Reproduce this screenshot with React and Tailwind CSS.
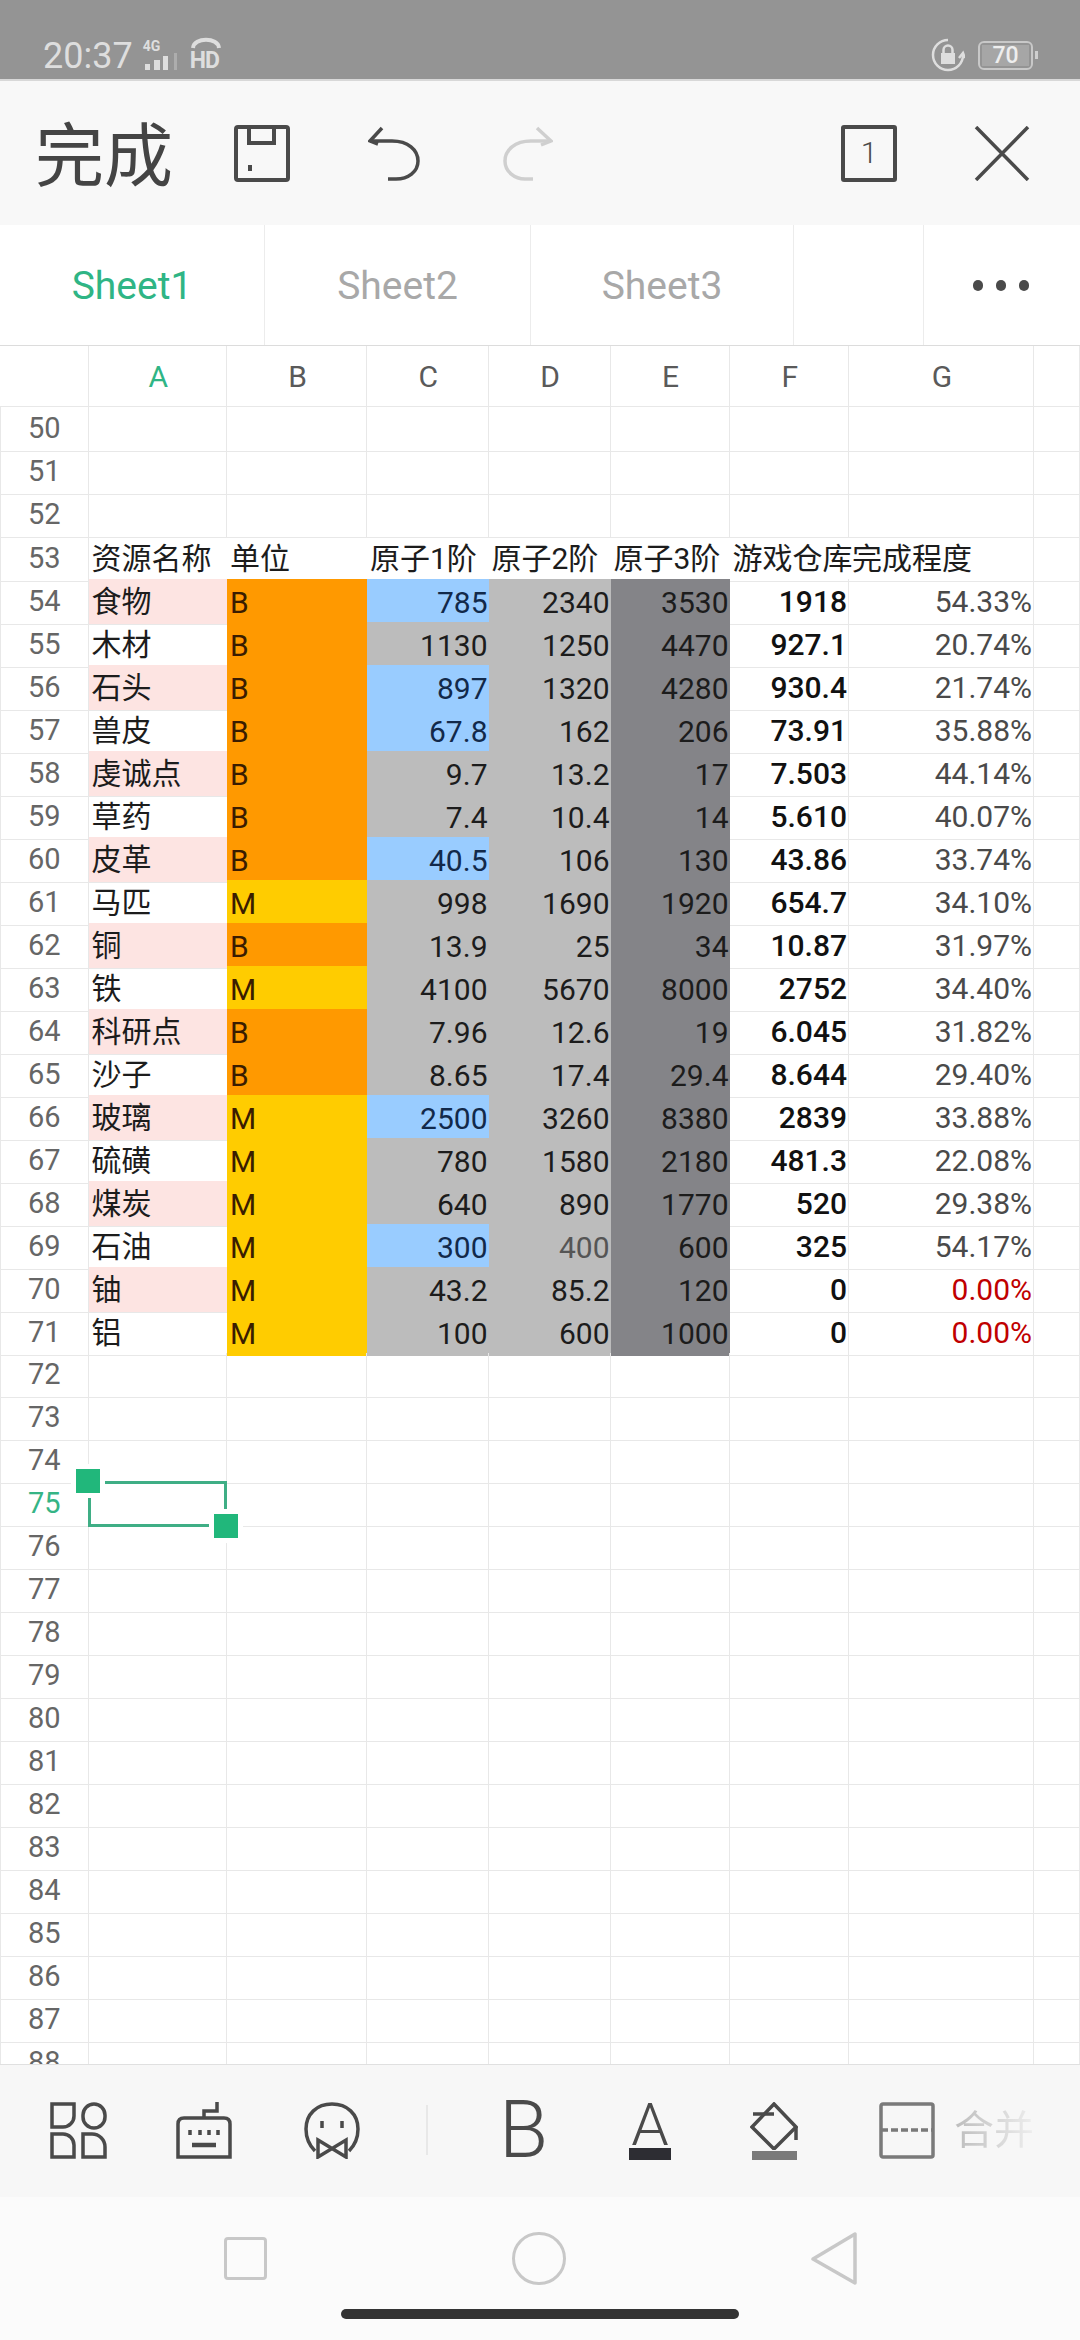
import React from 'react'

const COLS = 'grid-cols-[88.5px_138.5px_140px_121.5px_122px_119px_119.5px_185px_46px]'

// name, unit, c1, c2, c3, stock, pct, c1 is blue
const DATA = [
  [54, '食物', 'B', '785', '2340', '3530', '1918', '54.33%', true],
  [55, '木材', 'B', '1130', '1250', '4470', '927.1', '20.74%'],
  [56, '石头', 'B', '897', '1320', '4280', '930.4', '21.74%', true],
  [57, '兽皮', 'B', '67.8', '162', '206', '73.91', '35.88%', true],
  [58, '虔诚点', 'B', '9.7', '13.2', '17', '7.503', '44.14%'],
  [59, '草药', 'B', '7.4', '10.4', '14', '5.610', '40.07%'],
  [60, '皮革', 'B', '40.5', '106', '130', '43.86', '33.74%', true],
  [61, '马匹', 'M', '998', '1690', '1920', '654.7', '34.10%'],
  [62, '铜', 'B', '13.9', '25', '34', '10.87', '31.97%'],
  [63, '铁', 'M', '4100', '5670', '8000', '2752', '34.40%'],
  [64, '科研点', 'B', '7.96', '12.6', '19', '6.045', '31.82%'],
  [65, '沙子', 'B', '8.65', '17.4', '29.4', '8.644', '29.40%'],
  [66, '玻璃', 'M', '2500', '3260', '8380', '2839', '33.88%', true],
  [67, '硫磺', 'M', '780', '1580', '2180', '481.3', '22.08%'],
  [68, '煤炭', 'M', '640', '890', '1770', '520', '29.38%'],
  [69, '石油', 'M', '300', '400', '600', '325', '54.17%', true],
  [70, '铀', 'M', '43.2', '85.2', '120', '0', '0.00%'],
  [71, '铝', 'M', '100', '600', '1000', '0', '0.00%'],
]
const BY_ROW = Object.fromEntries(DATA.map(d => [d[0], d]))
const HEADERS = ['资源名称', '单位', '原子1阶', '原子2阶', '原子3阶', '游戏仓库', '完成程度']
const ROW_NUMBERS = Array.from({ length: 38 }, (_, i) => i + 50)

const LINE = 'border-r border-b border-[#e8e8e8]'
const NUM = 'flex items-center justify-end pr-[1px] whitespace-nowrap text-[30px]'

function RowLabel({ n }) {
  return (
    <div className={`flex items-center justify-center text-[29px] border-l ${LINE} ${n === 75 ? 'text-[#35b485]' : 'text-[#666666]'}`}>
      {n}
    </div>
  )
}

function EmptyRow({ n }) {
  return (
    <div className={`grid h-[43px] ${COLS}`}>
      <RowLabel n={n} />
      <div className={`relative ${LINE}`}>
        {n === 75 && (
          <div className="absolute -inset-px z-10 border-[3px] border-[#3fae85]">
            <div className="absolute -left-[15px] -top-[15px] w-[24px] h-[24px] bg-[#21b77b] ring-[5px] ring-white" />
            <div className="absolute -right-[14px] -bottom-[14px] w-[24px] h-[24px] bg-[#21b77b] ring-[5px] ring-white" />
          </div>
        )}
      </div>
      {[0, 1, 2, 3, 4, 5, 6].map(i => <div key={i} className={LINE} />)}
    </div>
  )
}

function HeaderRow() {
  return (
    <div className={`grid h-[43px] ${COLS}`}>
      <RowLabel n={53} />
      {HEADERS.map((h, i) => (
        <div key={h} className={`flex items-center pl-[3px] whitespace-nowrap text-[30px] text-[#1c1c1c] border-b border-[#e8e8e8] ${i === 6 ? 'border-r' : ''}`}>
          {h}
        </div>
      ))}
      <div className={LINE} />
    </div>
  )
}

function DataRow({ row }) {
  const [n, name, unit, c1, c2, c3, stock, pct, blue] = row
  const pink = n % 2 === 0
  const unitBg = unit === 'M' ? 'bg-[#ffcc00]' : 'bg-[#ff9900]'
  return (
    <div className={`grid h-[43px] ${COLS}`}>
      <RowLabel n={n} />
      <div className={`flex items-center pl-[3px] text-[30px] text-[#1c1c1c] border-b border-[#e8e8e8] ${pink ? 'bg-[#fde4e2]' : ''}`}>{name}</div>
      <div className={`flex items-center pl-[3px] text-[30px] text-[#3a1c00] ${unitBg}`}>{unit}</div>
      <div className={`${NUM} ${blue ? 'bg-[#99ccff] text-[#12294a]' : 'bg-[#bcbcbc] text-[#1c1c1c]'}`}>{c1}</div>
      <div className={`${NUM} bg-[#bcbcbc] ${n === 69 ? 'text-[#555555]' : 'text-[#1c1c1c]'}`}>{c2}</div>
      <div className={`${NUM} bg-[#848488] text-[#1c1c1c]`}>{c3}</div>
      <div className={`${NUM} font-medium text-[#111111] ${LINE}`}>{stock}</div>
      <div className={`${NUM} ${LINE} ${pct === '0.00%' ? 'text-[#c00000]' : 'text-[#4a4a4a]'}`}>{pct}</div>
      <div className={LINE} />
    </div>
  )
}

function StatusBar() {
  return (
    <div className="h-[81px] shrink-0 flex items-end justify-between pl-[43px] pr-[42px] pb-[7px] bg-[#949494] border-b-2 border-[#d8d8d8] text-[#dedede]">
      <div className="flex items-end">
        <span className="text-[36px] leading-[32px]">20:37</span>
        <div className="relative ml-[10px] w-[38px] h-[32px]">
          <span className="absolute left-0 -top-[1px] text-[14px] font-bold leading-none">4G</span>
          <svg width="38" height="17" viewBox="0 0 38 17" className="absolute left-0 bottom-[2px]" fill="currentColor">
            <rect x="2" y="11" width="5" height="6" />
            <rect x="11" y="7" width="6" height="10" />
            <rect x="20" y="3" width="5" height="14" />
            <rect x="31" y="0" width="3" height="17" opacity=".35" />
          </svg>
        </div>
        <div className="relative ml-[9px] w-[32px] h-[32px]">
          <svg width="32" height="13" viewBox="0 0 32 13" className="absolute left-0 -top-[3px]" fill="none" stroke="currentColor" strokeWidth="4">
            <path d="M3 11 C4 0 28 0 29 11" />
          </svg>
          <span className="absolute left-0 bottom-[1px] text-[23px] font-bold leading-[20px] tracking-[-1px]">HD</span>
        </div>
      </div>
      <div className="flex items-center gap-[13px]">
        <svg width="34" height="34" viewBox="0 0 34 34" fill="none" stroke="currentColor" strokeWidth="2.500">
          <path d="M17 2 A15 15 0 1 0 32 17" />
          <path d="M28 20 L32 15 L34 20" />
          <rect x="10" y="15" width="14" height="11" fill="currentColor" stroke="none" />
          <path d="M12.500 15 V12 A4.500 4.500 0 0 1 21.500 12 V15" />
        </svg>
        <div className="flex items-center gap-[2px]">
          <div className="w-[55px] h-[29px] rounded-[6px] border-2 border-[#c8c8c8] flex items-center justify-center p-[2px]">
            <span className="w-full h-full bg-[#a6a6a6] flex items-center justify-center text-[23px] font-medium leading-none text-[#eeeeee]">70</span>
          </div>
          <div className="w-[3px] h-[8px] bg-[#cfcfcf]" />
        </div>
      </div>
    </div>
  )
}

function TopBar() {
  return (
    <div className="h-[144px] shrink-0 flex items-center bg-[#f8f8f8] pl-[35px] pr-[50px] text-[#4a4a4a]">
      <span className="pt-[8px] text-[69px] leading-none text-[#444444] w-[139px] whitespace-nowrap">完成</span>
      <svg className="ml-[60px]" width="56" height="57" viewBox="0 0 56 57" fill="none" stroke="currentColor" strokeWidth="4">
        <rect x="2" y="2" width="52" height="53" rx="2" />
        <path d="M15 2 V18 H40 V2" />
        <path d="M16 40 V46" />
      </svg>
      <svg className="ml-[78px]" width="52" height="55" viewBox="0 0 52 55" fill="none" stroke="currentColor" strokeWidth="3.500">
        <path d="M14 2 L2 15 L10 18" />
        <path d="M2 15 H24 C40 15 50 24 50 35 C50 46 40 53 28 53 H20" />
      </svg>
      <svg className="ml-[83px]" width="50" height="55" viewBox="0 0 50 55" fill="none" stroke="#cfcfcf" strokeWidth="3.500">
        <path d="M34 2 L48 15 L38 19" />
        <path d="M48 15 H28 C12 15 2 24 2 35 C2 46 12 53 22 53 H30" />
      </svg>
      <div className="ml-auto w-[56px] h-[57px] rounded-[3px] border-[4px] border-[#4a4a4a] flex items-center justify-center text-[30px] font-light leading-none">1</div>
      <svg className="ml-[77px]" width="56" height="55" viewBox="0 0 56 55" fill="none" stroke="currentColor" strokeWidth="3.500">
        <path d="M2 1 L54 54 M54 1 L2 54" />
      </svg>
    </div>
  )
}

function Tabs() {
  return (
    <div className="h-[120px] shrink-0 grid grid-cols-[265px_266px_263px_130px_156px] text-[39px] bg-white">
      <div className="flex items-center justify-center pt-[2px] border-r border-[#ececec] text-[#2fb585]">Sheet1</div>
      <div className="flex items-center justify-center pt-[2px] border-r border-[#ececec] text-[#a8a8a8]">Sheet2</div>
      <div className="flex items-center justify-center pt-[2px] border-r border-[#ececec] text-[#a8a8a8]">Sheet3</div>
      <div className="border-r border-[#ececec]" />
      <div className="flex items-center justify-center gap-[13px] pr-[2px]">
        <span className="w-[10px] h-[11px] rounded-full bg-[#4a4a4a]" />
        <span className="w-[10px] h-[11px] rounded-full bg-[#4a4a4a]" />
        <span className="w-[10px] h-[11px] rounded-full bg-[#4a4a4a]" />
      </div>
    </div>
  )
}

function ColumnHeader() {
  return (
    <div className={`h-[62px] shrink-0 grid ${COLS} border-t border-[#dcdcdc] text-[30px] text-[#5a5a5a]`}>
      {['', 'A', 'B', 'C', 'D', 'E', 'F', 'G', ''].map((c, i) => (
        <div key={i} className={`flex items-center justify-center pl-[2px] ${LINE} ${c === 'A' ? 'text-[#2fb585]' : ''}`}>{c}</div>
      ))}
    </div>
  )
}

function BottomBar() {
  return (
    <div className="h-[132px] shrink-0 flex items-start pt-[37px] pl-[50px] bg-[#f7f7f7] text-[#4a4a4a] overflow-hidden">
      <svg width="57" height="57" viewBox="0 0 57 57" fill="none" stroke="currentColor" strokeWidth="3.500">
        <path d="M2 2 H24 V14 A11 11 0 0 1 13 25 H2 Z" />
        <rect x="33" y="2" width="22" height="24" rx="11" />
        <path d="M2 32 H13 A11 11 0 0 1 24 43 V55 H2 Z" />
        <path d="M33 32 H42 A13 13 0 0 1 55 45 V55 H33 Z" />
      </svg>
      <svg className="ml-[69px]" width="56" height="57" viewBox="0 0 56 57" fill="none" stroke="currentColor" strokeWidth="3.500">
        <path d="M28 16 V9 H41 V0" />
        <path d="M2 55 V22 Q2 16 8 16 H48 Q54 16 54 22 V55 Z" />
        <path d="M14 28 V33 M24 28 V33 M33 28 V33 M42 28 V33" />
        <path d="M16 43 H40" strokeWidth="4.500" />
      </svg>
      <svg className="ml-[72px]" width="56" height="57" viewBox="0 0 56 57" fill="none" stroke="currentColor" strokeWidth="3.500">
        <path d="M11 49 C4 42 2 35 2 27 C2 12 13 2 28 2 C43 2 54 12 54 27 C54 35 52 42 45 49" />
        <path d="M18 19 V26 M38 19 V26" />
        <path d="M14 38 L42 55 V38 L14 55 Z" />
      </svg>
      <div className="ml-[66px] mt-[3px] w-[2px] h-[50px] bg-[#e8e8e8]" />
      <span className="ml-[71px] w-[48px] text-[80px] leading-[57px] font-light">B</span>
      <div className="ml-[81px] w-[44px] flex flex-col items-center">
        <span className="text-[60px] leading-[46px] h-[46px] font-light">A</span>
        <div className="w-[42px] h-[12px] bg-[#2d2d33]" />
      </div>
      <div className="ml-[78px] w-[48px] flex flex-col items-center">
        <svg width="48" height="48" viewBox="0 0 48 48" fill="none" stroke="currentColor" strokeWidth="3.500">
          <path d="M24 2 L46 25 L24 47 L2 25 Z" />
          <path d="M3 12 H24 M46 25 V38" />
        </svg>
        <div className="mt-[1px] w-[45px] h-[9px] bg-[#7a7a7a]" />
      </div>
      <svg className="ml-[81px]" width="56" height="57" viewBox="0 0 56 57" fill="none" stroke="#7a7a7a" strokeWidth="3.500">
        <rect x="2" y="2" width="52" height="53" rx="2" />
        <path d="M2 28 H54" strokeDasharray="7 3" />
      </svg>
      <span className="ml-[19px] mt-[5px] w-[80px] shrink-0 whitespace-nowrap text-[40px] leading-[48px] bg-gradient-to-r from-[#bdbdbd] to-[#eeeeee] bg-clip-text text-transparent">合并</span>
    </div>
  )
}

function NavBar() {
  return (
    <div className="flex-1 flex flex-col items-center bg-[#fbfbfb]">
      <div className="flex items-center h-[112px] pt-[10px]">
        <div className="w-[43px] h-[43px] rounded-[4px] border-[3px] border-[#c8c8c8]" />
        <div className="ml-[245px] w-[54px] h-[53px] rounded-full border-[3px] border-[#c8c8c8]" />
        <svg className="ml-[245px]" width="46" height="53" viewBox="0 0 46 53" fill="none" stroke="#c8c8c8" strokeWidth="3.500" strokeLinejoin="round">
          <path d="M44 2 V51 L2 27 Z" />
        </svg>
      </div>
      <div className="w-[398px] h-[10px] rounded-full bg-[#333333]" />
    </div>
  )
}

export default function App() {
  return (
    <div className="w-[1080px] h-[2340px] flex flex-col overflow-hidden bg-white [font-family:Roboto,'Noto_Sans_CJK_SC',sans-serif]">
      <StatusBar />
      <TopBar />
      <Tabs />
      <ColumnHeader />
      <div className="relative h-[1658px] shrink-0 overflow-hidden border-b border-[#e0e0e0]">
        {ROW_NUMBERS.map(n => {
          if (n === 53) return <HeaderRow key={n} />
          if (BY_ROW[n]) return <DataRow key={n} row={BY_ROW[n]} />
          return <EmptyRow key={n} n={n} />
        })}
        <div className={`grid h-[43px] ${COLS}`}>
          <div className="flex items-start justify-center text-[29px] leading-[43px] text-[#666666] border-l border-r border-[#e8e8e8]">88</div>
          {[0, 1, 2, 3, 4, 5, 6, 7].map(i => <div key={i} className="border-r border-[#e8e8e8]" />)}
        </div>
      </div>
      <BottomBar />
      <NavBar />
    </div>
  )
}
